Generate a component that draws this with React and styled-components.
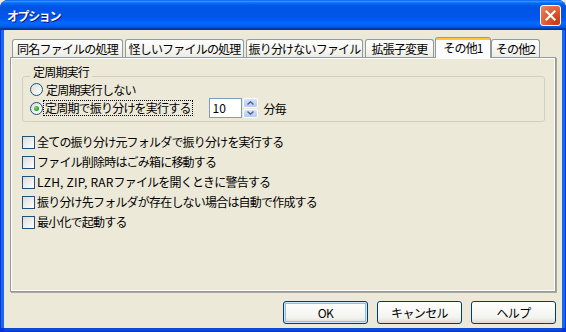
import React from "react";
import styled, { createGlobalStyle } from "styled-components";

const GlobalStyle = createGlobalStyle`
  html, body {
    margin: 0;
    padding: 0;
    background: #ece9d8;
  }
  body {
    font-family: "Noto Sans CJK JP", "MS UI Gothic", sans-serif;
    font-size: 12px;
    color: #000;
  }
  * { box-sizing: border-box; }
`;

const Window = styled.div`
  width: 566px;
  height: 332px;
  display: flex;
  flex-direction: column;
  background: #0831d9;
  border-radius: 8px 8px 0 0;
  overflow: hidden;
`;

const TitleBar = styled.div`
  height: 30px;
  flex: none;
  display: flex;
  align-items: center;
  justify-content: space-between;
  padding: 0 5px 0 7px;
  background: linear-gradient(
    to bottom,
    #0058ee 0%, #3593ff 4%, #288eff 6%, #127dff 8%, #036ffc 10%,
    #0262ee 14%, #0057e5 20%, #0054e3 24%, #0055eb 56%, #005bf5 66%,
    #026afe 76%, #0062ef 86%, #0052d6 92%, #0040ab 94%, #003092 100%
  );
`;

const Title = styled.span`
  color: #fff;
  font-weight: bold;
  font-size: 12px;
  letter-spacing: -1.4px;
  text-shadow: 1px 1px #0f1089;
  padding-top: 1px;
`;

const CloseButton = styled.div`
  width: 21px;
  height: 21px;
  border: 1px solid #fff;
  border-radius: 3px;
  background: radial-gradient(circle at 85% 85%, #c53b12 0%, #e0552c 45%, #eb8a65 100%);
  display: flex;
  align-items: center;
  justify-content: center;
`;

const Client = styled.div`
  flex: 1;
  display: flex;
  flex-direction: column;
  background: #ece9d8;
  margin: 0 4px 4px;
  padding: 7px 6px 4px;
  box-shadow: -3px 0 0 #166aee, 3px 0 0 #166aee, 0 3px 0 #0a4ad6;
`;

const TabRow = styled.div`
  display: flex;
  align-items: flex-end;
  gap: 2px;
  height: 21px;
  padding-left: 2px;
  position: relative;
  z-index: 1;
`;

const Tab = styled.div`
  width: ${p => p.$w}px;
  height: ${p => (p.$active ? 21 : 18)}px;
  margin: ${p => (p.$active ? "0 -2px 0 -1px" : "0 0 1px 0")};
  border: 1px solid #919b9c;
  border-bottom: none;
  border-top-color: ${p => (p.$active ? "#e68b2c" : "#919b9c")};
  border-radius: 3px 3px 0 0;
  background: ${p =>
    p.$active
      ? "linear-gradient(#ffc73c 0 2px, #fcfcfe 2px)"
      : "linear-gradient(#fefefe, #f4f3ee 70%, #ebeae3)"};
  display: flex;
  justify-content: center;
  align-items: ${p => (p.$active ? "flex-start" : "center")};
  padding-top: ${p => (p.$active ? 2 : 0)}px;
  letter-spacing: -0.8px;
  line-height: 16px;
  white-space: nowrap;
`;

const Panel = styled.div`
  height: 235px;
  margin-top: -1px;
  border: 1px solid #919b9c;
  box-shadow: inset 1px 1px #fff, inset -1px -1px #fff, 1px 1px 0 #aca899;
  background: #ece9d8;
  padding: 10px 10px 0 11px;
  display: flex;
  flex-direction: column;
`;

const Group = styled.fieldset`
  margin: 0;
  padding: 0 6px 3px 7px;
  border: 1px solid #d0d0bf;
  border-radius: 3px;
  min-width: 0;
`;

const Legend = styled.legend`
  padding: 0 3px 8px;
  line-height: 8px;
  letter-spacing: -0.8px;
`;

const OptionRow = styled.div`
  display: flex;
  align-items: center;
  min-height: ${p => p.$h || 17}px;
  margin-top: ${p => p.$mt || 0}px;
`;

const Radio = styled.span`
  width: 13px;
  height: 13px;
  flex: none;
  border-radius: 50%;
  border: 1px solid #1c5180;
  background: linear-gradient(135deg, #dcdcd7, #ffffff);
  position: relative;
  &::after {
    content: "";
    display: ${p => (p.$checked ? "block" : "none")};
    position: absolute;
    left: 3px;
    top: 3px;
    width: 5px;
    height: 5px;
    border-radius: 50%;
    background: radial-gradient(circle at 35% 35%, #6ee06e, #21a121 70%);
  }
`;

const Label = styled.span`
  margin-left: ${p => p.$ml || 2}px;
  padding: 0 1px;
  letter-spacing: -0.8px;
  line-height: 14px;
  white-space: nowrap;
  outline: ${p => (p.$focus ? "1px dotted #000" : "none")};
`;

const Latin = styled.span`
  letter-spacing: 0.2px;
`;

const SpinField = styled.div`
  display: flex;
  align-items: center;
  margin-left: 17px;
`;

const SpinInput = styled.div`
  width: 33px;
  height: 20px;
  border: 1px solid #7f9db9;
  background: #fff;
  padding-left: 3px;
  line-height: 18px;
`;

const SpinButtons = styled.div`
  width: 15px;
  height: 20px;
  margin-left: 1px;
  display: flex;
  flex-direction: column;
  gap: 1px;
`;

const SpinHalf = styled.div`
  flex: 1;
  border: 1px solid #fff;
  border-radius: 2px;
  background: linear-gradient(#d8e3fb, #b6caf6);
  display: flex;
  align-items: center;
  justify-content: center;
`;

const Unit = styled.span`
  margin-left: 6px;
  letter-spacing: -0.8px;
`;

const CheckList = styled.div`
  margin-top: 10px;
  display: flex;
  flex-direction: column;
`;

const CheckRow = styled.div`
  display: flex;
  align-items: center;
  height: 20px;
`;

const CheckBox = styled.span`
  width: 13px;
  height: 13px;
  flex: none;
  border: 1px solid #1c5180;
  background: linear-gradient(135deg, #dcdcd7, #ffffff);
`;

const ButtonRow = styled.div`
  display: flex;
  justify-content: flex-end;
  gap: 9px;
  margin-top: 9px;
`;

const Button = styled.div`
  width: 85px;
  height: 23px;
  border: 1px solid #003c74;
  border-radius: 3px;
  background: linear-gradient(#ffffff, #f3f3ef 75%, #dcd8cd);
  box-shadow: ${p =>
    p.$default ? "inset 0 0 0 1px #cee7ff, inset 0 0 0 2px #9ab9ec" : "none"};
  display: flex;
  align-items: center;
  justify-content: center;
  letter-spacing: -0.6px;
`;

const Arrow = ({ up }) => (
  <svg width="7" height="4" viewBox="0 0 7 4">
    <path
      d={up ? "M0.5 3.5 L3.5 0.8 L6.5 3.5" : "M0.5 0.5 L3.5 3.2 L6.5 0.5"}
      fill="none"
      stroke="#4d6185"
      strokeWidth="1.4"
    />
  </svg>
);

const tabs = [
  { label: "同名ファイルの処理", w: 111 },
  { label: "怪しいファイルの処理", w: 119 },
  { label: "振り分けないファイル", w: 117 },
  { label: "拡張子変更", w: 69 },
  { label: "その他1", w: 56, active: true },
  { label: "その他2", w: 49 },
];

const checks = [
  "全ての振り分け元フォルダで振り分けを実行する",
  "ファイル削除時はごみ箱に移動する",
  <><Latin>LZH, ZIP, RAR</Latin>ファイルを開くときに警告する</>,
  "振り分け先フォルダが存在しない場合は自動で作成する",
  "最小化で起動する",
];

export default function App() {
  return (
    <>
      <GlobalStyle />
      <Window>
        <TitleBar>
          <Title>オプション</Title>
          <CloseButton>
            <svg width="11" height="11" viewBox="0 0 11 11">
              <path d="M1.5 1.5 L9.5 9.5 M9.5 1.5 L1.5 9.5" stroke="#fff" strokeWidth="2.2" strokeLinecap="square" />
            </svg>
          </CloseButton>
        </TitleBar>
        <Client>
          <TabRow>
            {tabs.map(t => (
              <Tab key={t.label} $w={t.w} $active={t.active}>
                {t.label}
              </Tab>
            ))}
          </TabRow>
          <Panel>
            <Group>
              <Legend>定周期実行</Legend>
              <OptionRow $mt={-3}>
                <Radio />
                <Label $ml={2}>定周期実行しない</Label>
              </OptionRow>
              <OptionRow $h={20}>
                <Radio $checked />
                <Label $ml={1} $focus>定周期で振り分けを実行する</Label>
                <SpinField>
                  <SpinInput>10</SpinInput>
                  <SpinButtons>
                    <SpinHalf><Arrow up /></SpinHalf>
                    <SpinHalf><Arrow /></SpinHalf>
                  </SpinButtons>
                  <Unit>分毎</Unit>
                </SpinField>
              </OptionRow>
            </Group>
            <CheckList>
              {checks.map((c, i) => (
                <CheckRow key={i}>
                  <CheckBox />
                  <Label $ml={1}>{c}</Label>
                </CheckRow>
              ))}
            </CheckList>
          </Panel>
          <ButtonRow>
            <Button $default>OK</Button>
            <Button>キャンセル</Button>
            <Button>ヘルプ</Button>
          </ButtonRow>
        </Client>
      </Window>
    </>
  );
}
